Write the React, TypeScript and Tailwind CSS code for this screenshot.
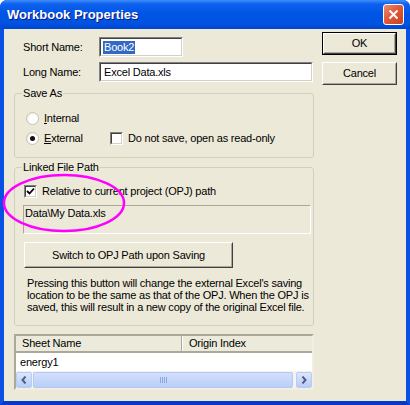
import React from "react";

function Btn({ label, def = false, className = "" }: { label: string; def?: boolean; className?: string }) {
  return (
    <div className={`${def ? "border border-black" : ""} ${className}`}>
      <div className="h-full w-full border border-t-white border-l-white border-b-[#404040] border-r-[#404040]">
        <div className="h-full w-full border border-t-[#ECE9D8] border-l-[#ECE9D8] border-b-[#ACA899] border-r-[#ACA899] flex items-center justify-center bg-[#ECE9D8]">
          {label}
        </div>
      </div>
    </div>
  );
}

function Radio({ checked }: { checked?: boolean }) {
  return (
    <div className="w-[13px] h-[13px] rounded-full border border-[#C6C3B6] bg-[radial-gradient(circle_at_65%_65%,#ffffff_0%,#ffffff_45%,#E2E0D6_100%)] flex items-center justify-center">
      {checked && <div className="w-[5px] h-[5px] rounded-full bg-[#111]" />}
    </div>
  );
}

function Check({ checked }: { checked?: boolean }) {
  return (
    <div className="w-[13px] h-[13px] border border-t-[#808080] border-l-[#808080] border-b-white border-r-white">
      <div className="w-full h-full border border-t-[#404040] border-l-[#404040] border-b-[#D4D0C8] border-r-[#D4D0C8] bg-white flex items-center justify-center">
        {checked && (
          <svg width="9" height="9" viewBox="0 0 9 9">
            <path d="M1 4 L3.5 6.5 L8 1.5" stroke="#000" strokeWidth="1.8" fill="none" />
          </svg>
        )}
      </div>
    </div>
  );
}

function SunkenInput({ className = "", children }: { className?: string; children?: React.ReactNode }) {
  return (
    <div className={`border border-t-[#808080] border-l-[#808080] border-b-white border-r-white ${className}`}>
      <div className="h-full w-full border border-t-[#404040] border-l-[#404040] border-b-[#D4D0C8] border-r-[#D4D0C8] bg-white flex items-center px-[2px]">
        {children}
      </div>
    </div>
  );
}

function ScrollArrow({ dir }: { dir: "l" | "r" }) {
  return (
    <div className="w-[16px] h-[16px] rounded-[2px] border border-[#B9CCF5] bg-[linear-gradient(to_bottom,#DCE6FD,#B8CCF8)] flex items-center justify-center">
      <svg width="6" height="8" viewBox="0 0 6 8">
        <path
          d={dir === "l" ? "M4.5 0.5 L1.5 4 L4.5 7.5" : "M1.5 0.5 L4.5 4 L1.5 7.5"}
          stroke="#4D6185"
          strokeWidth="2"
          fill="none"
        />
      </svg>
    </div>
  );
}

export default function App() {
  return (
    <div className="relative w-[410px] h-[405px] bg-white font-['Liberation_Sans',Tahoma,sans-serif] text-[11px] tracking-[-0.2px] text-black leading-[13px]">
      <div className="flex flex-col w-full h-full rounded-t-[7px] overflow-hidden bg-[#0A4FDF]">
        {/* title bar */}
        <div className="h-[29px] flex items-center justify-between pl-[7px] pr-[6px] bg-[linear-gradient(to_bottom,#3D8EFB_0%,#0E61EE_14%,#0055E5_45%,#0053E1_80%,#0044CF_100%)]">
          <span className="font-['Liberation_Sans',sans-serif] font-bold text-[13px] tracking-normal text-white [text-shadow:1px_1px_0_#0A1883]">
            Workbook Properties
          </span>
          <div className="w-[21px] h-[21px] rounded-[3px] border border-white bg-[linear-gradient(135deg,#EA8D72_0%,#E2593B_45%,#C8401F_100%)] flex items-center justify-center">
            <svg width="11" height="11" viewBox="0 0 11 11">
              <path d="M1.5 1.5 L9.5 9.5 M9.5 1.5 L1.5 9.5" stroke="#fff" strokeWidth="2" />
            </svg>
          </div>
        </div>

        {/* body */}
        <div className="flex-1 flex bg-[#ECE9D8] border-x-4 border-b-4 border-x-[#0A50E2] border-b-[#0838C8]">
          {/* left column */}
          <div className="ml-[10px] w-[300px] pt-[8px] flex flex-col">
            <div className="h-[20px] flex items-center">
              <span className="w-[85px] pl-[9px]">Short Name:</span>
              <SunkenInput className="w-[84px] h-[20px]">
                <span className="bg-[#316AC5] text-white px-[1px]">Book2</span>
              </SunkenInput>
            </div>
            <div className="h-[20px] mt-[5px] flex items-center">
              <span className="w-[85px] pl-[9px]">Long Name:</span>
              <SunkenInput className="w-[214px] h-[20px]">
                <span className="px-[1px]">Excel Data.xls</span>
              </SunkenInput>
            </div>

            <fieldset className="mt-[4px] h-[72px] border border-[#D0D0BF] rounded-[3px]">
              <legend className="ml-[7px] px-[1px] leading-[14px]">Save As</legend>
              <div className="mt-[10px] h-[16px] pl-[11px] flex items-center">
                <Radio />
                <span className="ml-[5px]">
                  <span className="underline">I</span>nternal
                </span>
              </div>
              <div className="mt-[4px] h-[16px] pl-[11px] flex items-center">
                <Radio checked />
                <span className="ml-[5px] w-[66px]">
                  <span className="underline">E</span>xternal
                </span>
                <Check />
                <span className="ml-[5px]">Do not save, open as read-only</span>
              </div>
            </fieldset>

            <fieldset className="mt-[2px] h-[166px] border border-[#D0D0BF] rounded-[3px]">
              <legend className="ml-[7px] px-[1px] leading-[14px]">Linked File Path</legend>
              <div className="mt-[10px] h-[14px] pl-[9px] flex items-center">
                <Check checked />
                <span className="ml-[5px]">Relative to current project (OPJ) path</span>
              </div>
              <div className="mt-[7px] ml-[8px] w-[288px] h-[29px] border border-t-[#ACA899] border-l-[#ACA899] border-b-white border-r-white px-[1px] pt-[1px]">
                Data\My Data.xls
              </div>
              <Btn label="Switch to OPJ Path upon Saving" className="mt-[8px] ml-[9px] w-[209px] h-[26px]" />
              <p className="mt-[9px] ml-[12px] w-[285px] leading-[12px]">
                Pressing this button will change the external Excel's saving location to be the same as that of the OPJ. When the OPJ is
                saved, this will result in a new copy of the original Excel file.
              </p>
            </fieldset>

            {/* list view */}
            <div className="mt-[8px] w-[300px] h-[56px] border-2 border-t-[#ACA899] border-l-[#ACA899] border-b-[#F1EFE2] border-r-[#F1EFE2] bg-white flex flex-col">
              <div className="h-[17px] flex bg-[#EBEADB] border-b-2 border-[#ACA899]">
                <div className="w-[166px] pl-[6px] flex items-center border-r border-[#ACA899]">Sheet Name</div>
                <div className="w-px bg-white" />
                <div className="flex-1 pl-[6px] flex items-center">Origin Index</div>
              </div>
              <div className="h-[18px] pl-[4px] flex items-center">energy1</div>
              <div className="h-[17px] flex items-center bg-[#F4F3EE]">
                <ScrollArrow dir="l" />
                <div className="ml-[1px] w-[260px] h-[16px] rounded-[2px] border border-[#B4C8F6] bg-[linear-gradient(to_bottom,#D3E0FD,#BACEF8)] flex items-center justify-center gap-[1px]">
                  <div className="w-px h-[6px] bg-[#8CA6E6]" />
                  <div className="w-px h-[6px] bg-[#8CA6E6]" />
                  <div className="w-px h-[6px] bg-[#8CA6E6]" />
                  <div className="w-px h-[6px] bg-[#8CA6E6]" />
                </div>
                <div className="flex-1" />
                <ScrollArrow dir="r" />
              </div>
            </div>
          </div>

          {/* right column */}
          <div className="ml-[8px] pt-[3px] flex flex-col">
            <Btn label="OK" def className="w-[75px] h-[23px]" />
            <Btn label="Cancel" className="mt-[7px] w-[75px] h-[23px]" />
          </div>
        </div>
      </div>

      {/* annotation ellipse */}
      <svg className="absolute left-0 top-0 pointer-events-none" width="410" height="405">
        <ellipse cx="64" cy="203" rx="60" ry="28" stroke="#FF00FF" strokeWidth="2.5" fill="none" />
      </svg>
    </div>
  );
}
